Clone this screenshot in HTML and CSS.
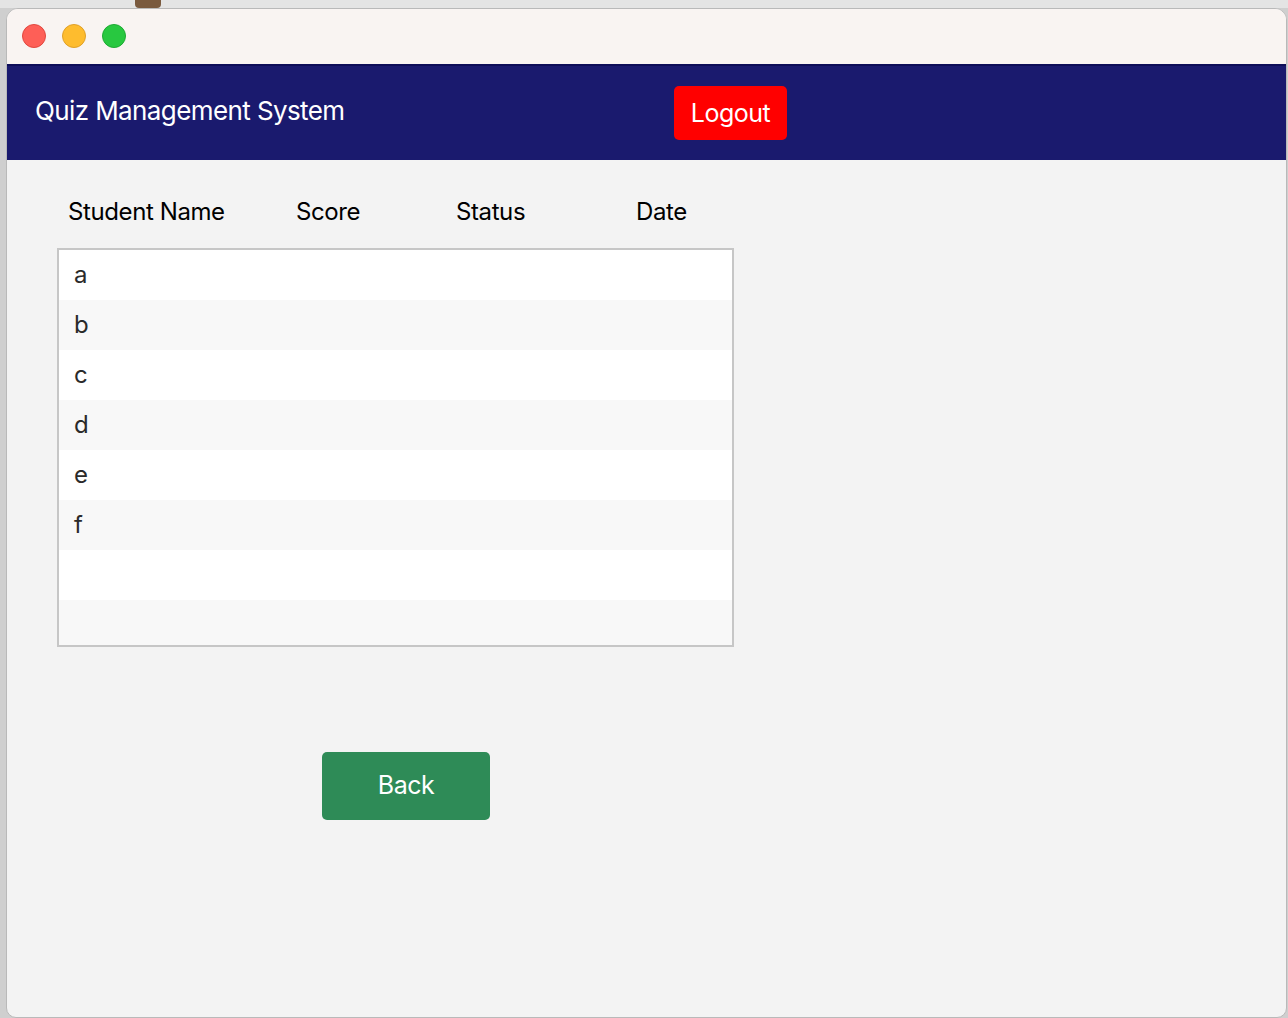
FILE: index.html
```html
<!DOCTYPE html>
<html lang="en">
<head>
<meta charset="utf-8">
<title>Quiz Management System</title>
<link rel="stylesheet" href="styles.css">
</head>
<body>
<div class="desktop">
  <div class="desk-photo"></div>
  <div class="window">
    <div class="titlebar">
      <span class="light red"></span>
      <span class="light yellow"></span>
      <span class="light green"></span>
    </div>
    <header class="appbar">
      <div class="app-title">Quiz Management System</div>
      <button class="logout">Logout</button>
    </header>
    <main class="content">
      <div class="col-heads">
        <span class="ch ch-name">Student Name</span>
        <span class="ch ch-score">Score</span>
        <span class="ch ch-status">Status</span>
        <span class="ch ch-date">Date</span>
      </div>
      <div class="list">
        <div class="row">a</div>
        <div class="row alt">b</div>
        <div class="row">c</div>
        <div class="row alt">d</div>
        <div class="row">e</div>
        <div class="row alt">f</div>
        <div class="row"></div>
        <div class="row alt"></div>
      </div>
      <div class="actions">
        <button class="back">Back</button>
      </div>
    </main>
  </div>
</div>
</body>
</html>
```

FILE: styles.css
```css
* { box-sizing: border-box; }
html, body { margin: 0; padding: 0; }
body {
  width: 1288px;
  height: 1018px;
  overflow: hidden;
  background: #d6d6d6;
  font-family: Inter, "Noto Sans", "Liberation Sans", sans-serif;
}
.desktop {
  position: relative;
  width: 1288px;
  height: 1018px;
  padding: 8px 1px 0 6px;
  background: linear-gradient(to bottom, #e4e4e4 0, #e4e4e4 8px, #cfcfcf 8px);
}
.desk-photo {
  position: absolute;
  left: 135px;
  top: 0;
  width: 26px;
  height: 8px;
  background: #7a5a3e;
  border-radius: 0 0 4px 4px;
}
.window {
  position: relative;
  height: 1010px;
  background: #f3f3f3;
  border: 1px solid #b9b9b9;
  border-radius: 12px 12px 10px 10px;
  overflow: hidden;
  display: flex;
  flex-direction: column;
}
.titlebar {
  height: 55px;
  background: #f9f4f2;
  display: flex;
  align-items: center;
  gap: 16px;
  padding-left: 15px;
  padding-bottom: 2px;
}
.light {
  width: 24px;
  height: 24px;
  border-radius: 50%;
}
.light.red { background: #fe5f57; border: 1px solid #e1473f; }
.light.yellow { background: #febc2e; border: 1px solid #e0a028; }
.light.green { background: #28c840; border: 1px solid #1eaa33; }
.appbar {
  height: 96px;
  background: #1a1a6e;
  border-top: 2px solid #0e0e58;
  display: flex;
  align-items: flex-start;
  padding-left: 28px;
}
.app-title {
  color: #ffffff;
  font-size: 26px;
  letter-spacing: -0.6px;
  margin-top: 29px;
  width: 639px;
}
.logout {
  margin-top: 20px;
  width: 113px;
  height: 54px;
  background: #ff0000;
  color: #ffffff;
  border: none;
  border-radius: 5px;
  font-family: inherit;
  font-size: 25px;
  letter-spacing: -0.5px;
  padding: 0;
}
.content {
  flex: 1;
  padding: 34px 0 0 50px;
}
.col-heads {
  display: flex;
  height: 34px;
  align-items: center;
  font-size: 24px;
  color: #000;
  letter-spacing: -0.4px;
}
.ch-name { margin-left: 11px; width: 228px; }
.ch-score { width: 160px; }
.ch-status { width: 180px; }
.list {
  margin-top: 20px;
  width: 677px;
  height: 399px;
  border: 2px solid #c6c6c6;
  background: #fff;
  overflow: hidden;
}
.row {
  height: 50px;
  padding-left: 15px;
  padding-bottom: 2px;
  display: flex;
  align-items: center;
  font-size: 24px;
  color: #2a2a2a;
  background: #ffffff;
}
.row.alt { background: #f8f8f8; }
.actions {
  margin-top: 105px;
  padding-left: 265px;
}
.back {
  width: 168px;
  height: 68px;
  background: #2e8b57;
  color: #ffffff;
  border: none;
  border-radius: 5px;
  font-family: inherit;
  font-size: 25px;
  letter-spacing: -0.5px;
  padding: 0 0 2px 0;
}
```
